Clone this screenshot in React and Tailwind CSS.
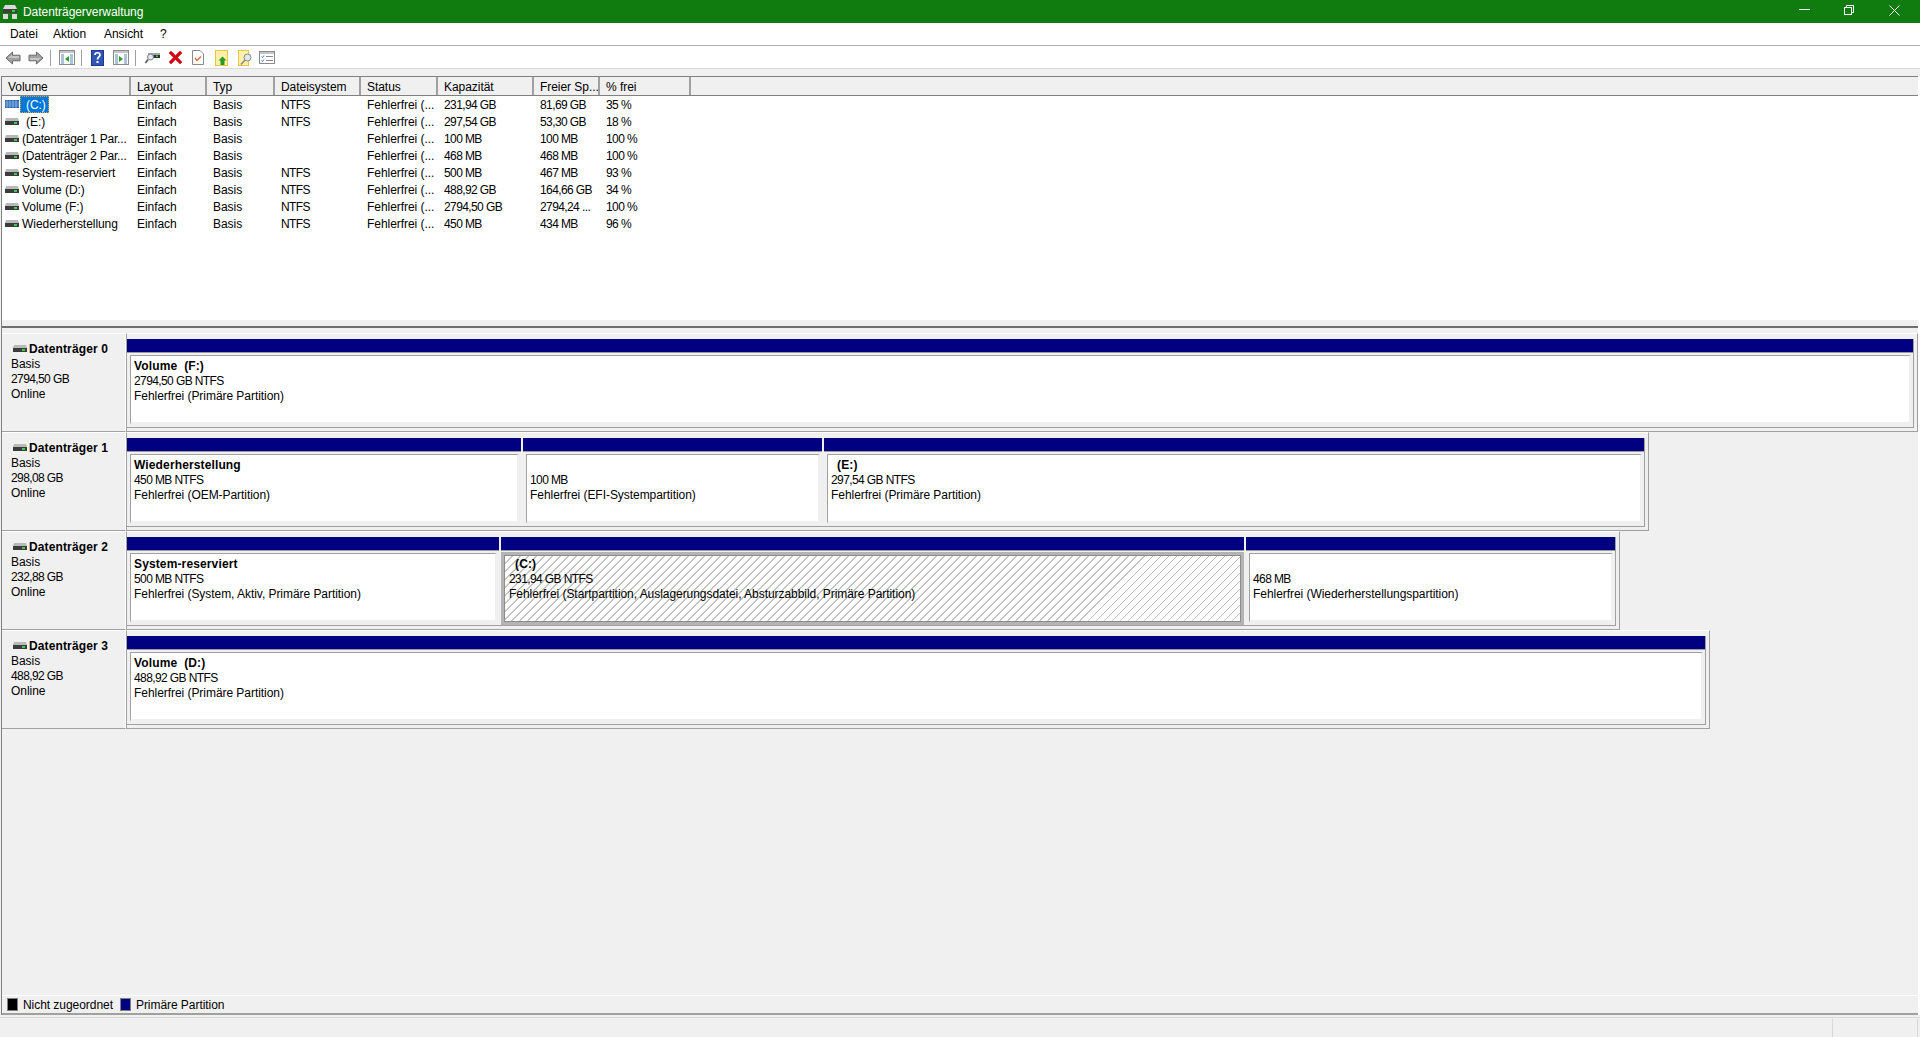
const font = "font-['Liberation_Sans',Arial,sans-serif]";

function Drive({ selected }) {
  if (selected) {
    return (
      <svg width="14" height="9" viewBox="0 0 14 9" className="shrink-0">
        <rect x="0" y="0" width="14" height="8" fill="#1f5aa8" />
        <path d="M0 2h14M0 4h14M0 6h14M2 0v8M5 0v8M8 0v8M11 0v8" stroke="#8fbce8" strokeWidth="0.8" />
      </svg>
    );
  }
  return (
    <svg width="14" height="9" viewBox="0 0 14 9" className="shrink-0">
      <path d="M1 1h12l1 3H0z" fill="#b9b9b9" />
      <rect x="0" y="4" width="14" height="4" fill="#3c3c3c" />
      <rect x="9" y="5" width="3" height="2" fill="#35d04a" />
    </svg>
  );
}

function Arrow({ flip }) {
  return (
    <svg width="16" height="14" viewBox="0 0 16 14" className={flip ? "rotate-180" : ""}>
      <path d="M7.5 1 1 7l6.5 6V9.8H15V4.2H7.5z" fill="#a2a2a2" stroke="#6a6a6a" />
      <path d="M7 4 3 7h11V5H7z" fill="#c6c6c6" />
    </svg>
  );
}

function Win({ kind }) {
  return (
    <svg width="16" height="15" viewBox="0 0 16 15">
      <rect x="0.5" y="0.5" width="15" height="14" fill="#fff" stroke="#8a8a8a" />
      <rect x="1" y="1" width="14" height="2" fill="#c4c4c4" />
      <path d="M2 5h3M2 7h3M2 9h3M2 11h3M2 13h3M11 5h3M11 7h3M11 9h3M11 11h3M11 13h3" stroke="#5a86b8" />
      <path d={kind === "left" ? "M10 6v6L6 9z" : "M6 6v6l4-3z"} fill="#28a028" />
    </svg>
  );
}

function Sep() {
  return <div className="h-[16px] w-px bg-[#a0a0a0]" />;
}

function Toolbar() {
  return (
    <div className="flex h-[22px] items-center bg-white pt-[1px] pl-[5px]">
      <Arrow />
      <div className="w-[7px]" />
      <Arrow flip />
      <div className="w-[6px]" />
      <Sep />
      <div className="w-[8px]" />
      <Win kind="left" />
      <div className="w-[6px]" />
      <Sep />
      <div className="w-[9px]" />
      <svg width="13" height="16" viewBox="0 0 13 16">
        <rect x="0" y="0" width="13" height="16" fill="#2f55b5" />
        <rect x="0.5" y="0.5" width="12" height="15" fill="none" stroke="#1c3a8a" />
        <path d="M4 5c0-3 5-3 5 0 0 2-2.5 2-2.5 4.500" fill="none" stroke="#fff" strokeWidth="1.700" />
        <rect x="5.500" y="11" width="2" height="2" fill="#fff" />
      </svg>
      <div className="w-[9px]" />
      <Win kind="right" />
      <div className="w-[6px]" />
      <Sep />
      <div className="w-[9px]" />
      <svg width="15" height="15" viewBox="0 0 15 15">
        <rect x="3" y="3" width="12" height="5" fill="#a5a5a5" />
        <rect x="8" y="5" width="7" height="3" fill="#2f2f2f" />
        <rect x="11" y="5.500" width="2" height="1.500" fill="#35d04a" />
        <circle cx="5.500" cy="7" r="3" fill="#dfeaf5" stroke="#808080" />
        <path d="M3 9.500 0.500 13" stroke="#555" strokeWidth="1.600" />
      </svg>
      <div className="w-[8px]" />
      <svg width="15" height="15" viewBox="0 0 15 15">
        <path d="M1 3 3 1l4.500 4.500L12 1l2 2-4.500 4.500L14 12l-2 2-4.500-4.500L3 14l-2-2 4.500-4.500z" fill="#d8000c" stroke="#b00008" strokeWidth="0.500" />
      </svg>
      <div className="w-[9px]" />
      <svg width="12" height="15" viewBox="0 0 12 15">
        <path d="M0.500 0.500h7.500l3.500 3.500v10.500h-11z" fill="#fff" stroke="#8a8a8a" />
        <path d="M3 8l2 2.500L9 6.500" fill="none" stroke="#e0662a" strokeWidth="1.300" />
      </svg>
      <div className="w-[11px]" />
      <svg width="13" height="16" viewBox="0 0 13 16">
        <rect x="0.500" y="0.500" width="12" height="15" fill="#fdf0a8" stroke="#e8c44a" />
        <path d="M7.500 6.500l4 4H9.500v4.500h-4v-4.500H3.500z" fill="#2a9a2a" />
      </svg>
      <div className="w-[10px]" />
      <svg width="14" height="16" viewBox="0 0 14 16">
        <rect x="0.500" y="0.500" width="10" height="15" fill="#fdf0a8" stroke="#e8c44a" />
        <circle cx="9.500" cy="7.500" r="3.500" fill="#dfeaf5" stroke="#8a8a8a" />
        <path d="M7 10 3 14.500" stroke="#8a8a8a" strokeWidth="1.600" />
      </svg>
      <div className="w-[7px]" />
      <svg width="16" height="13" viewBox="0 0 16 13">
        <rect x="0.500" y="0.500" width="15" height="12" fill="#fff" stroke="#8a8a8a" />
        <rect x="1" y="1" width="14" height="2" fill="#c4c4c4" />
        <path d="M2.500 5.500l1 1 1.500-2M2.500 9.500l1 1 1.500-2" fill="none" stroke="#2f7fd8" />
        <path d="M7 5.500h7M7 9.500h7" stroke="#8a8a8a" />
      </svg>
    </div>
  );
}

const columns = [
  ["Volume", "w-[129px]"],
  ["Layout", "w-[76px]"],
  ["Typ", "w-[68px]"],
  ["Dateisystem", "w-[86px]"],
  ["Status", "w-[77px]"],
  ["Kapazität", "w-[96px]"],
  ["Freier Sp...", "w-[66px]"],
  ["% frei", "w-[91px]"],
];

const rows = [
  ["(C:)", "Einfach", "Basis", "NTFS", "Fehlerfrei (...", "231,94 GB", "81,69 GB", "35 %"],
  ["(E:)", "Einfach", "Basis", "NTFS", "Fehlerfrei (...", "297,54 GB", "53,30 GB", "18 %"],
  ["(Datenträger 1 Par...", "Einfach", "Basis", "", "Fehlerfrei (...", "100 MB", "100 MB", "100 %"],
  ["(Datenträger 2 Par...", "Einfach", "Basis", "", "Fehlerfrei (...", "468 MB", "468 MB", "100 %"],
  ["System-reserviert", "Einfach", "Basis", "NTFS", "Fehlerfrei (...", "500 MB", "467 MB", "93 %"],
  ["Volume (D:)", "Einfach", "Basis", "NTFS", "Fehlerfrei (...", "488,92 GB", "164,66 GB", "34 %"],
  ["Volume (F:)", "Einfach", "Basis", "NTFS", "Fehlerfrei (...", "2794,50 GB", "2794,24 ...", "100 %"],
  ["Wiederherstellung", "Einfach", "Basis", "NTFS", "Fehlerfrei (...", "450 MB", "434 MB", "96 %"],
];

function VolumeTable() {
  return (
    <div className="flex h-[244px] flex-col bg-white">
      <div className="flex h-[20px] border-y border-[#808080] bg-[#f0f0f0]">
        {columns.map(([label, w]) => (
          <div key={label} className={`${w} overflow-hidden whitespace-nowrap border-r-2 border-[#a0a0a0] pl-[6px] leading-[20px] text-black`}>
            {label}
          </div>
        ))}
      </div>
      <div>
        {rows.map((r, i) => (
          <div key={r[0]} className="flex h-[17px] items-center">
            <div className="flex w-[129px] items-center whitespace-nowrap pl-[3px]">
              <Drive selected={i === 0} />
              {i === 0 ? (
                <span className="ml-[1px] flex h-[17px] w-[29px] items-center border border-dotted border-[#f0a040] bg-[#0078d7] pl-[5px] text-white">
                  {r[0]}
                </span>
              ) : (
                <span className={i === 1 ? "ml-[7px]" : i === 2 || i === 3 ? "ml-[3px] tracking-[-0.2px]" : "ml-[3px]"}>{r[0]}</span>
              )}
            </div>
            {r.slice(1).map((c, j) => (
              <div key={j} className={`${columns[j + 1][1]} overflow-hidden whitespace-nowrap pl-[6px] ${j === 2 || j >= 4 ? "tracking-[-0.6px]" : ""}`}>
                {c}
              </div>
            ))}
          </div>
        ))}
      </div>
    </div>
  );
}

const disks = [
  {
    name: "Datenträger 0", size: "2794,50 GB", w: "w-[1792px]",
    parts: [{ w: "flex-1", name: "Volume  (F:)", l2: "2794,50 GB NTFS", l3: "Fehlerfrei (Primäre Partition)" }],
  },
  {
    name: "Datenträger 1", size: "298,08 GB", w: "w-[1523px]",
    parts: [
      { w: "w-[394px]", name: "Wiederherstellung", l2: "450 MB NTFS", l3: "Fehlerfrei (OEM-Partition)" },
      { w: "w-[299px]", l2: "100 MB", l3: "Fehlerfrei (EFI-Systempartition)" },
      { w: "flex-1", name: "(E:)", indent: true, l2: "297,54 GB NTFS", l3: "Fehlerfrei (Primäre Partition)" },
    ],
  },
  {
    name: "Datenträger 2", size: "232,88 GB", w: "w-[1494px]",
    parts: [
      { w: "w-[372px]", name: "System-reserviert", l2: "500 MB NTFS", l3: "Fehlerfrei (System, Aktiv, Primäre Partition)" },
      { w: "w-[743px]", name: "(C:)", indent: true, selected: true, l2: "231,94 GB NTFS", l3: "Fehlerfrei (Startpartition, Auslagerungsdatei, Absturzabbild, Primäre Partition)" },
      { w: "flex-1", l2: "468 MB", l3: "Fehlerfrei (Wiederherstellungspartition)" },
    ],
  },
  {
    name: "Datenträger 3", size: "488,92 GB", w: "w-[1584px]",
    parts: [{ w: "flex-1", name: "Volume  (D:)", l2: "488,92 GB NTFS", l3: "Fehlerfrei (Primäre Partition)" }],
  },
];

function PartText({ p, top }) {
  return (
    <div className={top}>
      <div className={`h-[15px] whitespace-pre font-bold tracking-[0.13px] ${p.indent ? "pl-[6px]" : ""}`}>{p.name || ""}</div>
      <div className="h-[15px] tracking-[-0.6px]">{p.l2}</div>
      <div className="h-[15px]">{p.l3}</div>
    </div>
  );
}

function Partition({ p }) {
  return (
    <div className={`${p.w} flex flex-col`}>
      <div className="h-[14px] border-b border-[#9a9a9a] bg-[#000080]" />
      {p.selected ? (
        <div className="mt-px flex-1 bg-[#b4b4b4] p-[3px]">
          <div className="h-full border border-[#8c8c8c] bg-[repeating-linear-gradient(135deg,#ffffff_0px,#ffffff_4.700px,#c4c4c4_4.700px,#c4c4c4_5.660px)] pl-[4px] leading-[15px] text-black">
            <PartText p={p} top="pt-[1px]" />
          </div>
        </div>
      ) : (
        <div className="flex-1 pt-[2px] pr-[2px] pb-[2px] pl-[3px]">
          <div className="h-full border-t border-r-2 border-b-[3px] border-l border-t-[#a0a0a0] border-r-[#f0f0f0] border-b-[#f0f0f0] border-l-[#a0a0a0] bg-white pl-[3px] leading-[15px]">
            <PartText p={p} top="pt-[3px]" />
          </div>
        </div>
      )}
    </div>
  );
}

function Disk({ d }) {
  return (
    <div className="flex h-[99px]">
      <div className="h-full w-[124px] shrink-0 border-t border-r border-b border-t-white border-r-white border-b-[#a0a0a0] pt-[8px] pl-[9px] leading-[15px]">
        <div className="flex items-center font-bold tracking-[0.13px]">
          <span className="mr-[2px] mb-[3px] ml-[2px]"><Drive /></span>
          {d.name}
        </div>
        <div>Basis</div>
        <div className="tracking-[-0.6px]">{d.size}</div>
        <div>Online</div>
      </div>
      <div className={`${d.w} h-full shrink-0 border-t border-r border-b border-l border-t-white border-r-[#a0a0a0] border-b-[#a0a0a0] border-l-[#a0a0a0] pt-[5px] pr-[3px] pb-[3px]`}>
        <div className="flex h-full gap-[2px] border-r border-b border-[#a0a0a0]">
          {d.parts.map((p, i) => (
            <Partition key={i} p={p} />
          ))}
        </div>
      </div>
    </div>
  );
}

function Title() {
  return (
    <div className="flex h-[23px] items-center bg-[#107c10] pl-[2px] text-white">
      <svg width="16" height="15" viewBox="0 0 16 15">
        <path d="M3 1h10l2 4H1z" fill="#d9d9d9" />
        <rect x="1" y="5" width="14" height="4" fill="#404040" />
        <rect x="10" y="6" width="3" height="2" fill="#35d04a" />
        <rect x="1" y="10" width="5" height="5" fill="#d9d9d9" />
        <rect x="10" y="10" width="5" height="5" fill="#d9d9d9" />
      </svg>
      <span className="ml-[5px]">Datenträgerverwaltung</span>
      <div className="flex-1" />
      <div className="flex h-[20px] items-center self-start pr-[20px]">
        <svg width="11" height="2" viewBox="0 0 11 2"><rect width="11" height="1" fill="#fff" /></svg>
        <div className="w-[34px]" />
        <svg width="10" height="10" viewBox="0 0 10 10">
          <path d="M2.500 2.500V.5h7v7h-2" fill="none" stroke="#fff" />
          <rect x="0.500" y="2.500" width="7" height="7" fill="none" stroke="#fff" />
        </svg>
        <div className="w-[35px]" />
        <svg width="11" height="11" viewBox="0 0 11 11">
          <path d="M.5.500l10 10M10.500.500l-10 10" stroke="#fff" />
        </svg>
      </div>
    </div>
  );
}

function Menu() {
  return (
    <div className="flex h-[23px] items-center border-b border-[#b0b0b0] bg-white pb-px pl-[10px] text-black">
      <span className="w-[43px]">Datei</span>
      <span className="w-[51px]">Aktion</span>
      <span className="w-[56px]">Ansicht</span>
      <span>?</span>
    </div>
  );
}

export default function App() {
  return (
    <div className={`${font} flex h-[1037px] w-[1920px] flex-col overflow-hidden bg-[#f0f0f0] text-[12px] tracking-[-0.05px] text-black`}>
      <Title />
      <Menu />
      <Toolbar />
      <div className="h-[8px] border-t border-[#d9d9d9]" />
      <div className="ml-px flex flex-1 flex-col border-r-2 border-l border-r-white border-l-[#808080]">
        <VolumeTable />
        <div className="h-[13px]">
          <div className="h-[8px] border-b-2 border-[#707070]" />
        </div>
        <div className="flex-1 overflow-hidden">
          {disks.map((d) => (
            <Disk key={d.name} d={d} />
          ))}
        </div>
        <div className="flex h-[20px] items-center border-t border-b-2 border-t-white border-b-[#a0a0a0] pl-[5px]">
          <div className="h-[13px] w-[11px] border border-[#808080] bg-black" />
          <span className="ml-[5px]">Nicht zugeordnet</span>
          <div className="ml-[7px] h-[13px] w-[11px] border border-[#808080] bg-[#000080]" />
          <span className="ml-[5px]">Primäre Partition</span>
        </div>
      </div>
      <div className="flex h-[22px] flex-col pt-[2px]">
        <div className="flex flex-1 justify-end border-t border-[#d9d9d9] pt-[1px]">
          <div className="h-full w-[85px] border-l border-[#d9d9d9]" />
          <div className="h-full w-[3px] border-l border-[#d9d9d9]" />
        </div>
      </div>
    </div>
  );
}
